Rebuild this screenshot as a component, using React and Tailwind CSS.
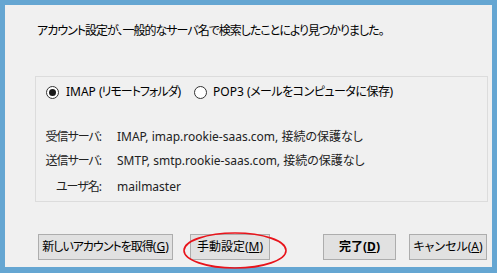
import React from "react";

const font = "[font-family:'Noto_Sans','Noto_Sans_CJK_JP',sans-serif] [font-feature-settings:'palt']";

function Radio({ checked }) {
  return (
    <span className="w-[13px] h-[13px] rounded-full border border-[#333] bg-white flex items-center justify-center shrink-0">
      {checked && <span className="w-[7px] h-[7px] rounded-full bg-[#1a1a1a]" />}
    </span>
  );
}

function Btn({ children, className = "" }) {
  return (
    <div className={`h-[26px] border border-[#adadad] bg-[#e1e1e1] flex items-center justify-center whitespace-nowrap text-[12px] text-black ${className}`}>
      {children}
    </div>
  );
}

function Row({ label, value, className = "" }) {
  return (
    <div className={`flex items-center h-[16px] text-[12px] text-[#222] whitespace-nowrap ${className}`}>
      <span className="w-[65px] text-right tracking-[-1px]">{label}</span>
      <span className="ml-[16px]">{value}</span>
    </div>
  );
}

export default function App() {
  return (
    <div className={`w-[497px] h-[273px] bg-[#65a6d2] pt-[5px] pl-[5px] pr-[5px] pb-[6px] ${font}`}>
      <div className="relative w-full h-full bg-[#f0f0f0] flex flex-col pl-[30px] pr-[4px]">
        <div className="mt-[18px] ml-[2px] h-[16px] flex items-center text-[12px] text-black whitespace-nowrap tracking-[-1px]">
          アカウント設定が、一般的なサーバ名で検索したことにより見つかりました。
        </div>
        <div className="mt-[37px] h-[126px] border border-[#dcdcdc] flex flex-col">
          <div className="mt-[7px] ml-[10px] h-[16px] flex items-center text-[12px] text-black whitespace-nowrap">
            <Radio checked />
            <span className="ml-[7px]">IMAP <span className="tracking-[-1px]">(リモートフォルダ)</span></span>
            <span className="ml-[14px]"><Radio /></span>
            <span className="ml-[6px]">POP3 <span className="tracking-[-0.5px]">(メールをコンピュータに保存)</span></span>
          </div>
          <Row className="mt-[29px]" label="受信サーバ:" value="IMAP, imap.rookie-saas.com, 接続の保護なし" />
          <Row className="mt-[8px]" label="送信サーバ:" value="SMTP, smtp.rookie-saas.com, 接続の保護なし" />
          <Row className="mt-[10px]" label="ユーザ名:" value="mailmaster" />
        </div>
        <div className="mt-[32px] flex items-center pl-[3px]">
          <Btn className="w-[135px]"><span className="tracking-[-1px]">新しいアカウントを取得</span>(<u>G</u>)</Btn>
          <Btn className="ml-[17px] w-[80px]">手動設定(<u>M</u>)</Btn>
          <Btn className="ml-[53px] w-[73px] font-bold">完了(<u>D</u>)</Btn>
          <Btn className="ml-[13px] w-[78px]">キャンセル(<u>A</u>)</Btn>
        </div>
        <svg className="absolute left-[177px] top-[226px] pointer-events-none" width="106" height="40" viewBox="0 0 106 40">
          <ellipse cx="53" cy="19.5" rx="51" ry="17.5" fill="none" stroke="#e8141b" strokeWidth="1.6" />
        </svg>
      </div>
    </div>
  );
}
